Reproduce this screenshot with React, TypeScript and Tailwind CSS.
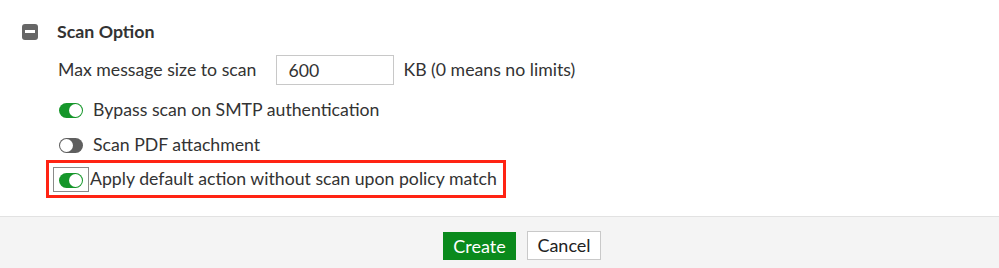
import { useState } from 'react';

function Toggle({ on }: { on: boolean }) {
  return (
    <span
      className={
        'relative inline-block w-[24px] h-[15px] rounded-full shrink-0 ' +
        (on ? 'bg-[#16962a]' : 'bg-[#5f5f5f]')
      }
    >
      <span
        className={
          'absolute top-[1px] w-[13px] h-[13px] rounded-full bg-white ' +
          (on ? 'right-[1px]' : 'left-[1px]')
        }
      />
    </span>
  );
}

export default function App() {
  const [size, setSize] = useState('600');

  return (
    <div className="w-[999px] h-[268px] bg-white flex flex-col text-[#333] font-['Lato','Open_Sans',sans-serif]">
      <div className="h-[217px] border-b border-[#e2e2e2] pt-[23px] pl-[22px]">
        {/* Section header */}
        <div className="flex items-center h-[17px]">
          <span className="w-[16px] h-[16px] rounded-[3px] bg-[#666] flex items-center justify-center">
            <span className="w-[10px] h-[3px] bg-white" />
          </span>
          <span className="ml-[19px] text-[17.8px] font-bold text-[#333]">Scan Option</span>
        </div>

        <div className="pl-[36px] text-[17.7px]">
          <div className="flex items-center mt-[15px] h-[30px]">
            <span>Max message size to scan</span>
            <input
              value={size}
              onChange={(e) => setSize(e.target.value)}
              className="ml-[20px] w-[118px] h-[30px] border border-[#c8c8c8] px-[11px] text-[17.7px] text-[#333] outline-none"
            />
            <span className="ml-[9px]">KB (0 means no limits)</span>
          </div>

          <div className="flex items-center mt-[18px] h-[15px] pl-[1px]">
            <Toggle on />
            <span className="ml-[10px]">Bypass scan on SMTP authentication</span>
          </div>

          <div className="flex items-center mt-[20px] h-[15px] pl-[1px]">
            <Toggle on={false} />
            <span className="ml-[10px]">Scan PDF attachment</span>
          </div>
        </div>

        <div className="mt-[7px] ml-[24px] w-[460px] h-[38px] border-[3px] border-[#ff2313] flex items-center pl-[4px]">
          <span className="border border-[#8a8a8a] px-[5px] pt-[5px] pb-[3px] flex">
            <Toggle on />
          </span>
          <span className="ml-[1px] text-[17.7px] whitespace-nowrap">Apply default action without scan upon policy match</span>
        </div>
      </div>

      <div className="flex-1 bg-[#f4f4f4] flex items-start justify-center pl-[45px] pt-[15px] gap-[11px]">
        <button className="w-[73px] h-[28px] bg-[#0a8a1c] text-white text-[18px] border border-[#0a8a1c]">
          Create
        </button>
        <button className="w-[74px] h-[29px] bg-white text-[#222] text-[18px] border border-[#c9c9c9] -mt-[1px]">
          Cancel
        </button>
      </div>
    </div>
  );
}
